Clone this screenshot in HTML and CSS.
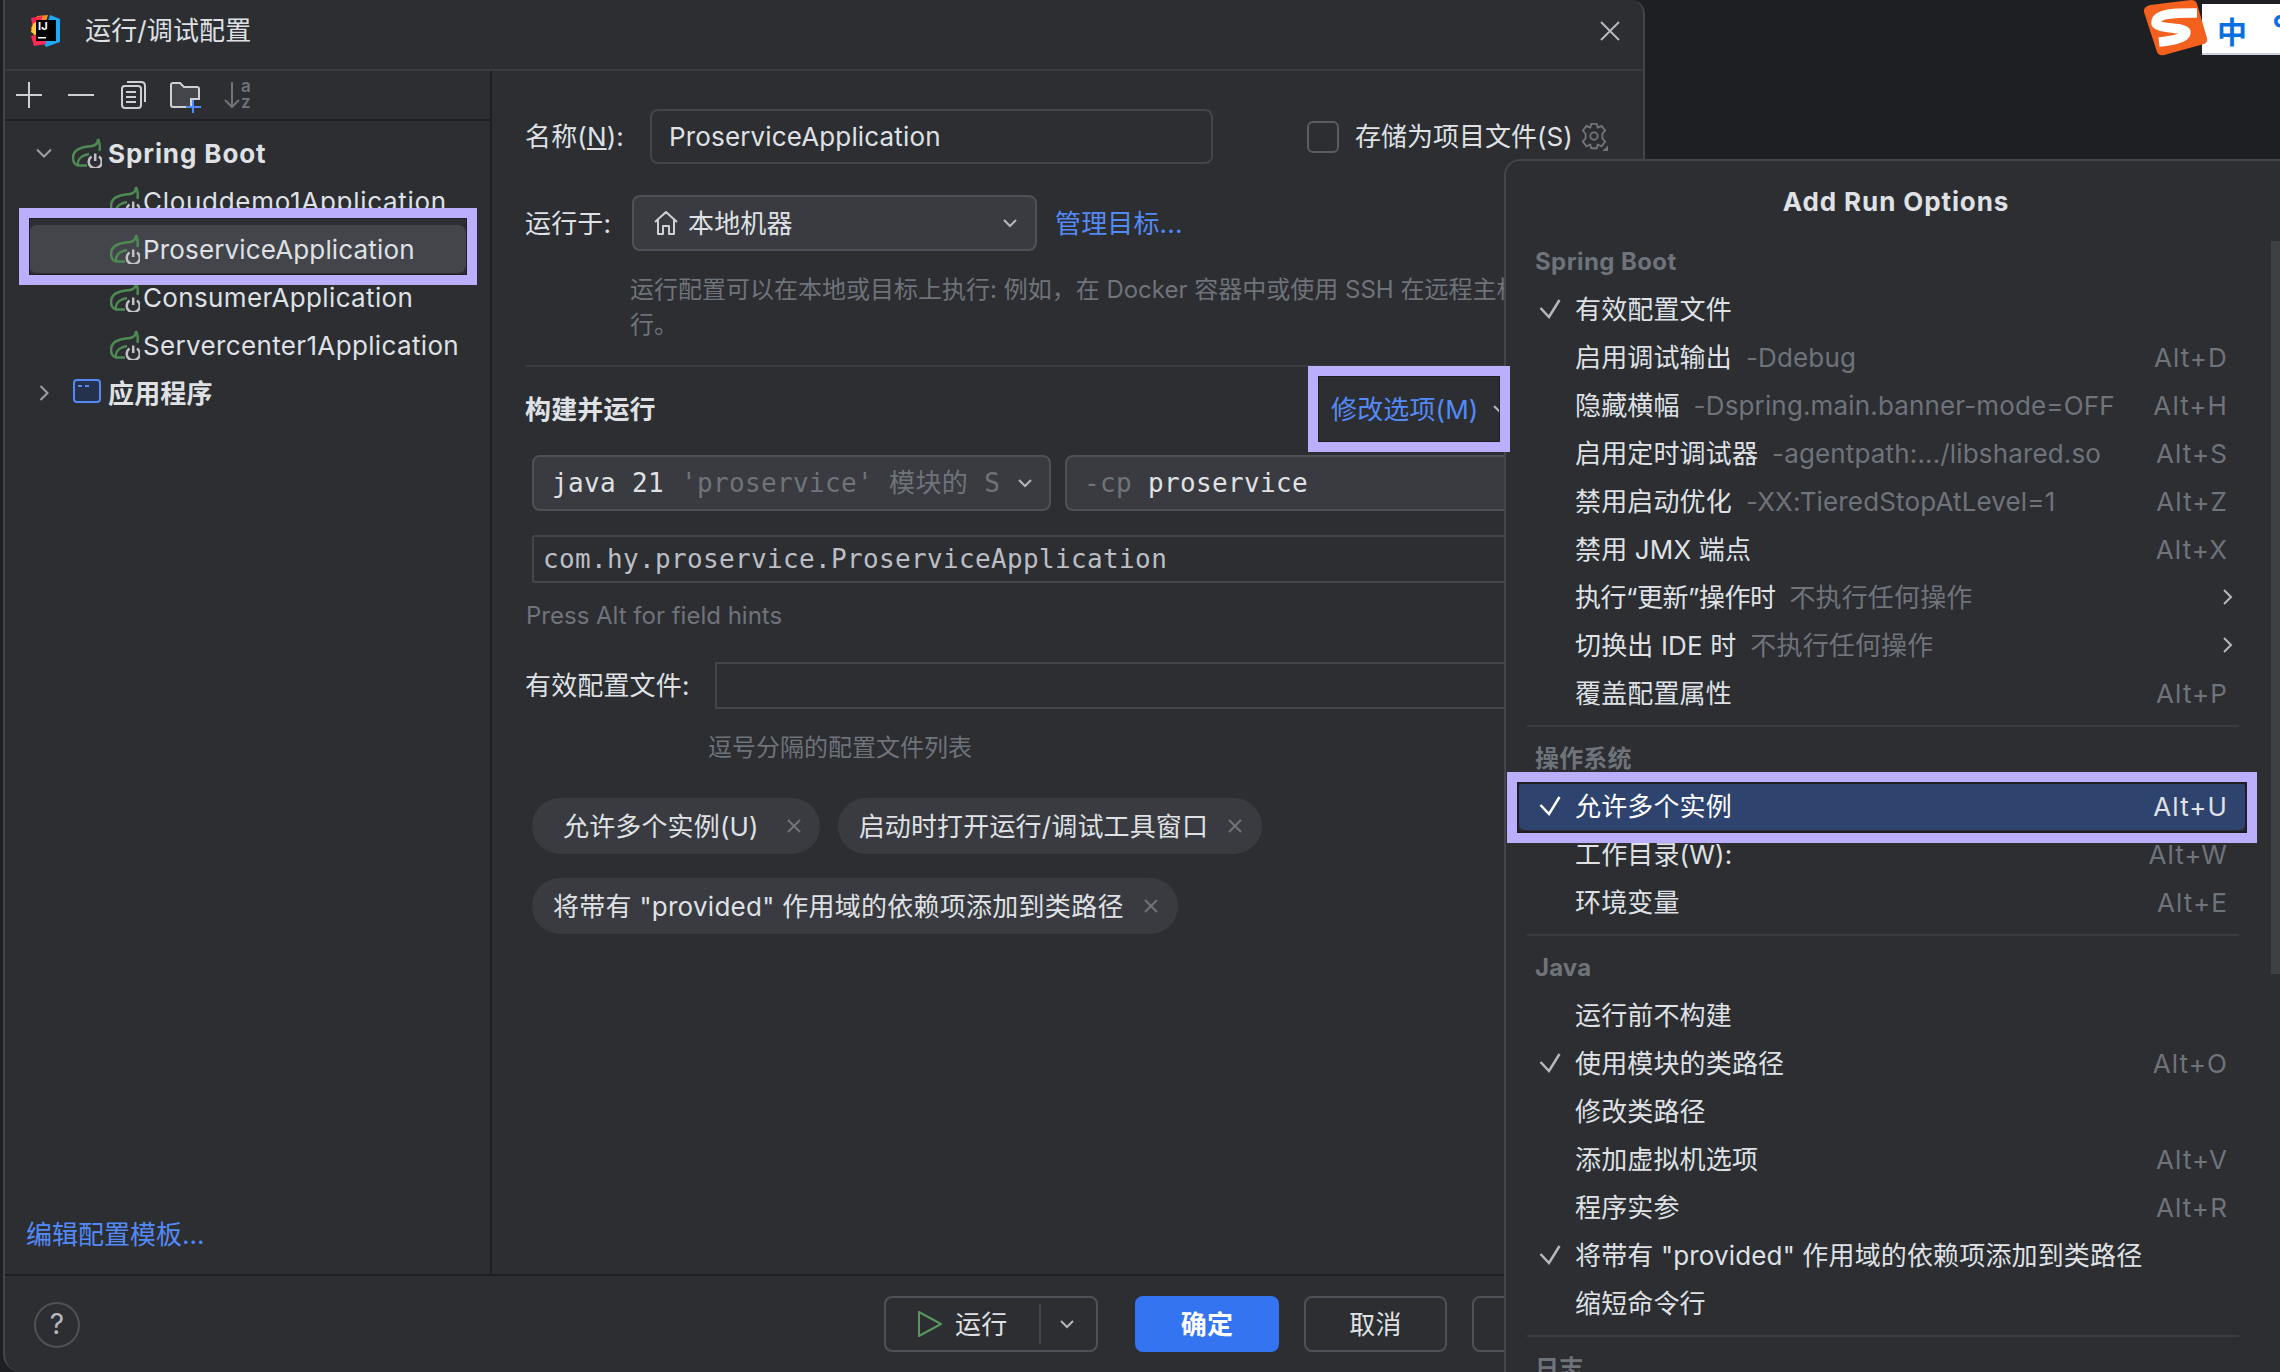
FILE: index.html
```html
<!DOCTYPE html>
<html lang="zh">
<head>
<meta charset="utf-8">
<title>运行/调试配置</title>
<link rel="stylesheet" href="styles.css">
</head>
<body>
<svg class="defs" width="0" height="0" aria-hidden="true">
  <symbol id="spring" viewBox="0 0 30 30">
    <path d="M26 1C26 7 22 8 16 8.500C7 9.500 1 13 1 20C1 24 3 26.500 6 27.500H15" fill="none" stroke="#4f8a55" stroke-width="2.500"/>
    <path d="M26 1C28 5 28 9 27.500 13M6 27.500C5 22 9 17.500 17 16" fill="none" stroke="#4f8a55" stroke-width="2.500"/>
    <path d="M19.500 18.500A6.500 6.500 0 1 0 27 18.500" fill="none" stroke="#c0c2c7" stroke-width="2.500"/>
    <path d="M23.200 15.500V23" fill="none" stroke="#c0c2c7" stroke-width="2.500"/>
  </symbol>
  <symbol id="check" viewBox="0 0 22 20">
    <path d="M1.500 9L10 18L20.500 1" fill="none" stroke="currentColor" stroke-width="2.500"/>
  </symbol>
</svg>

<div class="dialog">
  <header class="titlebar">
    <svg class="ij" width="34" height="34" viewBox="0 0 34 34">
      <polygon points="3,14 9,2 20,1 16,14 6,22" fill="#ff8a1f"/>
      <polygon points="3,4 14,2 13,16 5,14" fill="#fe2857"/>
      <polygon points="22,1 32,5 32,28 18,33 14,27" fill="#1fa8f5"/>
      <polygon points="3,22 16,20 18,30 6,32" fill="#fe2857"/>
      <polygon points="5,10 10,6 10,22 3,18" fill="#ffcc33"/>
      <rect x="8" y="6" width="20" height="21" fill="#000"/>
      <text x="10" y="16" class="ij-text">IJ</text>
      <rect x="10" y="23" width="8" height="1.500" fill="#fff"/>
    </svg>
    <span class="title-text">运行/调试配置</span>
    <svg class="close" width="22" height="22" viewBox="0 0 22 22"><path d="M2 2L20 20M20 2L2 20" stroke="#b4b8bf" stroke-width="2" fill="none"/></svg>
  </header>

  <div class="main">
    <aside class="sidebar">
      <div class="toolbar">
        <svg width="36" height="36" viewBox="0 0 36 36"><path d="M18 5V31M5 18H31" stroke="#ced0d6" stroke-width="2"/></svg>
        <svg width="36" height="36" viewBox="0 0 36 36"><path d="M5 18H31" stroke="#ced0d6" stroke-width="2"/></svg>
        <svg width="36" height="36" viewBox="0 0 36 36"><rect x="7" y="9" width="19" height="22" rx="3" fill="none" stroke="#ced0d6" stroke-width="2"/><path d="M12 5H26C29 5 30 6 30 9V25" fill="none" stroke="#ced0d6" stroke-width="2"/><path d="M11 15H21M11 20H21M11 25H21" stroke="#ced0d6" stroke-width="2"/></svg>
        <svg width="36" height="36" viewBox="0 0 36 36"><path d="M4 8Q4 6 6 6H13L17 10H30Q32 10 32 12V22H24V30H6Q4 30 4 28Z" fill="#43454a" stroke="#ced0d6" stroke-width="2"/><path d="M26 23V36M19 30H34" stroke="#548af7" stroke-width="2"/></svg>
        <svg width="36" height="36" viewBox="0 0 36 36"><path d="M13 5V30M6 23L13 30L20 23" fill="none" stroke="#6f737a" stroke-width="2"/><text x="22" y="15" class="sort-text">a</text><text x="22" y="31" class="sort-text">z</text></svg>
      </div>
      <div class="tree">
        <div class="tree-row">
          <svg class="twisty" width="16" height="16" viewBox="0 0 16 16"><path d="M1 4.500L8 11.500L15 4.500" fill="none" stroke="#9da0a8" stroke-width="2"/></svg>
          <svg class="leaf" width="30" height="30"><use href="#spring"/></svg>
          <span class="tree-label-bold latin-bold">Spring Boot</span>
        </div>
        <div class="tree-row child"><svg class="leaf" width="30" height="30"><use href="#spring"/></svg><span class="wide">Clouddemo1Application</span></div>
        <div class="tree-row child selected"><svg class="leaf" width="30" height="30"><use href="#spring"/></svg><span>ProserviceApplication</span></div>
        <div class="tree-row child"><svg class="leaf" width="30" height="30"><use href="#spring"/></svg><span class="mid">ConsumerApplication</span></div>
        <div class="tree-row child"><svg class="leaf" width="30" height="30"><use href="#spring"/></svg><span class="mid">Servercenter1Application</span></div>
        <div class="tree-row">
          <svg class="twisty" width="16" height="16" viewBox="0 0 16 16"><path d="M4.500 1L11.500 8L4.500 15" fill="none" stroke="#9da0a8" stroke-width="2"/></svg>
          <svg class="leaf" width="30" height="30" viewBox="0 0 30 30"><rect x="2" y="2" width="26" height="22" rx="3" fill="#25324d" stroke="#548af7" stroke-width="2"/><path d="M6 8H10M13 8H17" stroke="#548af7" stroke-width="2"/></svg>
          <span class="tree-label-bold">应用程序</span>
        </div>
      </div>
      <a class="link template-link">编辑配置模板...</a>
    </aside>

    <section class="form">
      <div class="field-row name-row">
        <label class="label name-label">名称(<u>N</u>):</label>
        <div class="input name-input">ProserviceApplication</div>
        <span class="checkbox"></span>
        <span class="check-label">存储为项目文件(S)</span>
        <svg class="gear" width="28" height="30" viewBox="0 0 30 32"><path d="M12 2H18L19 6L23 4L27 9L24 12.500V17.500L27 21L23 26L19 24L18 28H12L11 24L7 26L3 21L6 17.500V12.500L3 9L7 4L11 6Z" fill="none" stroke="#6f737a" stroke-width="2" stroke-linejoin="round"/><circle cx="15" cy="15" r="4" fill="none" stroke="#6f737a" stroke-width="2"/><path d="M30 25V31H24Z" fill="#6f737a"/></svg>
      </div>

      <div class="field-row run-row">
        <label class="label run-label">运行于:</label>
        <div class="combo run-combo">
          <svg width="26" height="26" viewBox="0 0 26 26"><path d="M2 12L13 2L24 12M5 10V24H10V16H16V24H21V10" fill="none" stroke="#ced0d6" stroke-width="2" stroke-linejoin="round"/></svg>
          <span>本地机器</span>
          <svg class="combo-chev" width="16" height="16" viewBox="0 0 16 16"><path d="M2 5L8 11L14 5" fill="none" stroke="#b4b8bf" stroke-width="2"/></svg>
        </div>
        <a class="link manage-link">管理目标...</a>
      </div>
      <p class="hint desc">运行配置可以在本地或目标上执行: 例如，在 Docker 容器中或使用 SSH 在远程主机上运<br>行。</p>

      <div class="divider"></div>

      <div class="section-row">
        <strong class="section-title">构建并运行</strong>
        <a class="link modify-link">修改选项(M)
          <svg width="16" height="16" viewBox="0 0 16 16"><path d="M2 5L8 11L14 5" fill="none" stroke="#b4b8bf" stroke-width="2"/></svg>
        </a>
      </div>

      <div class="cmd-row">
        <div class="combo mono java-combo">
          <span>java 21</span><span class="dim">'proservice' 模块的 S</span>
          <svg class="combo-chev" width="16" height="16" viewBox="0 0 16 16"><path d="M2 5L8 11L14 5" fill="none" stroke="#b4b8bf" stroke-width="2"/></svg>
        </div>
        <div class="combo mono cp-combo"><span class="dim">-cp</span><span>proservice</span></div>
      </div>
      <div class="input mono main-class">com.hy.proservice.ProserviceApplication</div>
      <p class="hint alt-hint">Press Alt for field hints</p>

      <div class="field-row profile-row">
        <label class="label profile-label">有效配置文件:</label>
        <div class="input profile-input"></div>
      </div>
      <p class="hint profile-hint">逗号分隔的配置文件列表</p>

      <div class="chips">
        <span class="chip chip-first">允许多个实例(U)<svg width="14" height="14" viewBox="0 0 14 14"><path d="M1 1L13 13M13 1L1 13" stroke="#6f737a" stroke-width="2"/></svg></span>
        <span class="chip">启动时打开运行/调试工具窗口<svg width="14" height="14" viewBox="0 0 14 14"><path d="M1 1L13 13M13 1L1 13" stroke="#6f737a" stroke-width="2"/></svg></span>
        <span class="chip chip-long">将带有 "provided" 作用域的依赖项添加到类路径<svg width="14" height="14" viewBox="0 0 14 14"><path d="M1 1L13 13M13 1L1 13" stroke="#6f737a" stroke-width="2"/></svg></span>
      </div>
    </section>
  </div>

  <footer class="footer">
    <span class="help">?</span>
    <div class="buttons">
      <div class="btn run-btn">
        <svg width="26" height="28" viewBox="0 0 26 28"><path d="M2 2L24 14L2 26Z" fill="none" stroke="#57965c" stroke-width="2" stroke-linejoin="round"/></svg>
        <span>运行</span>
        <i class="run-sep"></i>
        <svg width="16" height="16" viewBox="0 0 16 16"><path d="M2 5L8 11L14 5" fill="none" stroke="#b4b8bf" stroke-width="2"/></svg>
      </div>
      <div class="btn primary">确定</div>
      <div class="btn plain">取消</div>
      <div class="btn plain">应用</div>
    </div>
  </footer>
</div>

<div class="popup">
  <i class="popup-scroll"></i>
  <div class="popup-title">Add Run Options</div>
  <div class="group-head first">Spring Boot</div>
  <div class="opt"><span class="tick"><svg width="22" height="20"><use href="#check"/></svg></span><span>有效配置文件</span></div>
  <div class="opt"><span class="tick"></span><span>启用调试输出</span><span class="opt-hint">-Ddebug</span><kbd>Alt+D</kbd></div>
  <div class="opt"><span class="tick"></span><span>隐藏横幅</span><span class="opt-hint">-Dspring.main.banner-mode=OFF</span><kbd>Alt+H</kbd></div>
  <div class="opt"><span class="tick"></span><span>启用定时调试器</span><span class="opt-hint">-agentpath:.../libshared.so</span><kbd>Alt+S</kbd></div>
  <div class="opt"><span class="tick"></span><span>禁用启动优化</span><span class="opt-hint">-XX:TieredStopAtLevel=1</span><kbd>Alt+Z</kbd></div>
  <div class="opt"><span class="tick"></span><span>禁用 JMX 端点</span><kbd>Alt+X</kbd></div>
  <div class="opt"><span class="tick"></span><span class="tight">执行“更新”操作时</span><span class="opt-hint">不执行任何操作</span><svg class="opt-arrow" width="12" height="18" viewBox="0 0 12 18"><path d="M2 2L9 9L2 16" fill="none" stroke="#b4b8bf" stroke-width="2"/></svg></div>
  <div class="opt"><span class="tick"></span><span>切换出 IDE 时</span><span class="opt-hint">不执行任何操作</span><svg class="opt-arrow" width="12" height="18" viewBox="0 0 12 18"><path d="M2 2L9 9L2 16" fill="none" stroke="#b4b8bf" stroke-width="2"/></svg></div>
  <div class="opt"><span class="tick"></span><span>覆盖配置属性</span><kbd>Alt+P</kbd></div>
  <div class="sep"></div>
  <div class="group-head">操作系统</div>
  <div class="opt active"><span class="tick"><svg width="22" height="20"><use href="#check"/></svg></span><span>允许多个实例</span><kbd>Alt+U</kbd></div>
  <div class="opt"><span class="tick"></span><span>工作目录(W):</span><kbd>Alt+W</kbd></div>
  <div class="opt"><span class="tick"></span><span>环境变量</span><kbd>Alt+E</kbd></div>
  <div class="sep"></div>
  <div class="group-head">Java</div>
  <div class="opt"><span class="tick"></span><span>运行前不构建</span></div>
  <div class="opt"><span class="tick"><svg width="22" height="20"><use href="#check"/></svg></span><span>使用模块的类路径</span><kbd>Alt+O</kbd></div>
  <div class="opt"><span class="tick"></span><span>修改类路径</span></div>
  <div class="opt"><span class="tick"></span><span>添加虚拟机选项</span><kbd>Alt+V</kbd></div>
  <div class="opt"><span class="tick"></span><span>程序实参</span><kbd>Alt+R</kbd></div>
  <div class="opt"><span class="tick"><svg width="22" height="20"><use href="#check"/></svg></span><span>将带有 "provided" 作用域的依赖项添加到类路径</span></div>
  <div class="opt"><span class="tick"></span><span>缩短命令行</span></div>
  <div class="sep"></div>
  <div class="group-head">日志</div>
</div>

<i class="mark mark-tree"></i>
<i class="mark mark-modify"></i>
<i class="mark mark-option"></i>

<div class="ime">
  <svg class="ime-logo" width="66" height="56" viewBox="0 0 66 56">
    <path d="M7 5L48 0Q53 0 54 4L64 38Q65 42 61 44L21 55Q16 56 14 52L1 12Q0 7 7 5Z" fill="#f4611f"/>
    <path d="M54 13C40 13 14 12 13 22C12 30 44 26 43 33C42 39 26 41 16 42" fill="none" stroke="#fff" stroke-width="9.500"/>
  </svg>
  <span class="ime-zh">中</span>
  <span class="ime-dot">°</span>
</div>
</body>
</html>
```

FILE: styles.css
```css
* { box-sizing: border-box; }
html, body { margin: 0; padding: 0; }
body {
  position: relative;
  width: 2280px;
  height: 1372px;
  overflow: hidden;
  background: #1e1f22;
  color: #dfe1e5;
  font-family: "Inter", "Noto Sans CJK SC", sans-serif;
  font-size: 26px;
  line-height: 35px;
  letter-spacing: .15px;
}
.defs { position: absolute; }
p { margin: 0; }
a { text-decoration: none; }
i { font-style: normal; display: block; }
svg { flex: none; display: block; }

.dialog {
  width: 1642px;
  height: 1372px;
  margin-left: 3px;
  display: flex;
  flex-direction: column;
  background: #2c2e32;
  border: 2px solid #43454a;
  border-top: 0;
  border-bottom: 0;
  border-radius: 0 14px 0 18px;
  overflow: hidden;
}

.titlebar {
  height: 71px;
  flex: none;
  display: flex;
  align-items: center;
  padding: 0 22px 8px 23px;
  border-bottom: 2px solid #393b40;
}
.ij { margin-right: 23px; }
.ij-text { font: 700 11px "Inter", sans-serif; fill: #fff; }
.title-text { color: #dfe1e5; }
.close { margin-left: auto; }

.main { flex: 1; min-height: 0; display: flex; }

.sidebar {
  width: 487px;
  flex: none;
  display: flex;
  flex-direction: column;
  border-right: 2px solid #1e1f22;
}
.toolbar {
  height: 50px;
  flex: none;
  display: flex;
  align-items: center;
  gap: 16px;
  padding-left: 6px;
  border-bottom: 2px solid #1e1f22;
}
.sort-text { font: 600 17px "Inter", sans-serif; fill: #6f737a; }
.tree { padding: 8px 0 0 24px; width: 461px; }
.tree-row {
  height: 48px;
  display: flex;
  align-items: center;
  padding-left: 7px;
  border-radius: 8px;
  white-space: nowrap;
}
.twisty { margin-right: 20px; }
.tree-row .leaf { margin-right: 6px; }
.tree-label-bold { font-weight: 700; }
.latin-bold { letter-spacing: .9px; }
.wide { letter-spacing: .7px; }
.mid { letter-spacing: .35px; }
.tree-row.child { padding-left: 81px; }
.tree-row.child .leaf { margin-right: 3px; }
.tree-row.selected { background: #43454a; }

.link { color: #548af7; }
.template-link { margin: auto 0 22px 21px; letter-spacing: 0; }

.form {
  flex: 1;
  min-width: 0;
  padding-left: 33px;
  overflow: hidden;
  white-space: nowrap;
}
.field-row { display: flex; align-items: center; }
.name-row { margin-top: 38px; }
.label { flex: none; }
.name-label { width: 125px; }
.input {
  height: 55px;
  display: flex;
  align-items: center;
  border: 2px solid #43454a;
  border-radius: 8px;
  padding-left: 17px;
}
.name-input { width: 563px; }
.checkbox {
  width: 32px;
  height: 32px;
  margin-left: 94px;
  border: 2px solid #5a5d63;
  border-radius: 6px;
  flex: none;
}
.check-label { margin-left: 16px; letter-spacing: 0; }
.gear { margin-left: 7px; }

.run-row { margin-top: 31px; }
.run-label { width: 107px; }
.combo {
  height: 56px;
  display: flex;
  align-items: center;
  background: #393b40;
  border: 2px solid #4e5157;
  border-radius: 8px;
  flex: none;
}
.run-combo { width: 405px; padding: 0 17px 0 19px; gap: 9px; }
.combo-chev { margin-left: auto; }
.manage-link { margin-left: 18px; }

.hint { color: #6f737a; font-size: 24px; line-height: 35px; letter-spacing: 0; }
.desc { padding-left: 105px; margin-top: 21px; }
.divider { height: 2px; background: #393b40; margin-top: 23px; width: 1100px; }

.section-row { height: 84px; display: flex; align-items: center; }
.section-title { width: 806px; flex: none; font-weight: 700; }
.modify-link { display: flex; align-items: center; gap: 13px; }

.cmd-row { display: flex; gap: 14px; margin: 4px 0 0 7px; }
.mono {
  font-family: "DejaVu Sans Mono", "Noto Sans CJK SC", monospace;
  font-size: 26px;
  letter-spacing: .35px;
}
.java-combo { width: 519px; padding: 0 21px 0 18px; gap: 17px; }
.cp-combo { width: 700px; padding-left: 17px; gap: 16px; }
.dim { color: #6f737a; }
.main-class {
  width: 1100px;
  height: 48px;
  margin: 24px 0 0 7px;
  padding-left: 9px;
  border-radius: 2px;
  color: #bcbec4;
}
.alt-hint { margin: 15px 0 0 1px; }
.profile-row { margin-top: 29px; }
.profile-label { width: 190px; }
.profile-input { flex: none; width: 900px; height: 47px; border-radius: 0; }
.profile-hint { padding-left: 183px; margin-top: 21px; }

.chips {
  display: flex;
  flex-wrap: wrap;
  gap: 24px 18px;
  width: 900px;
  margin: 33px 0 0 7px;
}
.chip {
  height: 56px;
  display: flex;
  align-items: center;
  gap: 20px;
  padding: 0 20px 0 21px;
  border-radius: 28px;
  background: #393b40;
}
.chip-first { padding: 0 19px 0 31px; gap: 28px; }
.chip-long { letter-spacing: .27px; }

.footer {
  height: 98px;
  flex: none;
  display: flex;
  padding: 20px 0 0 29px;
  border-top: 2px solid #1e1f22;
}
.help {
  width: 46px;
  height: 46px;
  margin-top: 6px;
  border: 2px solid #4e5157;
  border-radius: 50%;
  text-align: center;
  line-height: 41px;
  font-size: 28px;
  color: #b4b8bf;
  flex: none;
}
.buttons { display: flex; gap: 25px; margin-left: 804px; }
.btn {
  height: 56px;
  display: flex;
  align-items: center;
  justify-content: center;
  border: 2px solid #4e5157;
  border-radius: 8px;
  flex: none;
}
.run-btn { width: 214px; justify-content: flex-start; padding-left: 31px; margin-right: 12px; }
.run-btn span { margin-left: 12px; }
.run-sep { width: 2px; height: 40px; background: #43454a; margin: 0 18px 0 32px; }
.primary { width: 144px; background: #3574f0; border-color: #3574f0; color: #fff; font-weight: 700; }
.plain { width: 143px; }

.popup {
  position: absolute;
  left: 1504px;
  top: 159px;
  right: 0;
  bottom: 0;
  overflow: hidden;
  background: #2c2e32;
  border: 2px solid #43454a;
  border-right: 0;
  border-bottom: 0;
  border-radius: 16px 0 0 0;
}
.popup-scroll {
  position: absolute;
  right: 0;
  top: 80px;
  width: 9px;
  height: 733px;
  background: #3e4044;
}
.popup-title { height: 81px; line-height: 81px; text-align: center; font-weight: 700; padding-left: 6px; letter-spacing: .9px; }
.group-head { height: 55px; padding: 9px 0 0 29px; line-height: 46px; color: #6f737a; font-weight: 700; font-size: 24px; }
.group-head.first { height: 43px; padding-top: 0; line-height: 40px; letter-spacing: .4px; }
.opt {
  height: 48px;
  margin: 0 34px 0 12px;
  padding-right: 18px;
  display: flex;
  align-items: center;
  border-radius: 8px;
  white-space: nowrap;
}
.tick { width: 57px; flex: none; height: 20px; padding-left: 21px; color: #b4b8bf; }
.tight { letter-spacing: -.5px; }
.opt-hint { margin-left: 14px; color: #6f737a; }
kbd { margin-left: auto; font: inherit; color: #6f737a; letter-spacing: 1.1px; }
.opt-arrow { margin: 0 -6px 0 auto; }
.opt.active { background: #2e436e; color: #fff; }
.opt.active .tick { color: #fff; }
.opt.active kbd { color: #dfe1e5; }
.sep { height: 2px; margin: 8px 41px 0 21px; background: #393b40; }

.mark {
  position: absolute;
  border: 10px solid #bbaefc;
  box-shadow: inset 0 0 0 1px #1e1f22;
  pointer-events: none;
}
.mark-tree { left: 19px; top: 208px; width: 458px; height: 77px; }
.mark-modify { left: 1308px; top: 366px; width: 202px; height: 86px; }
.mark-option { left: 1507px; top: 772px; width: 750px; height: 71px; box-shadow: inset 0 0 0 2px #1e1f22; }

.ime {
  position: absolute;
  right: 0;
  top: 4px;
  width: 78px;
  height: 51px;
  background: #fff;
  border-bottom: 2px solid #c9d0de;
  color: #0a6fe0;
}
.ime-logo { position: absolute; left: -59px; top: -4px; }
.ime-zh { position: absolute; left: 15px; top: 8px; font: 700 30px/36px "Noto Sans CJK SC", sans-serif; }
.ime-dot { position: absolute; left: 70px; top: 6px; font: 700 36px/36px "Inter", sans-serif; }
```
